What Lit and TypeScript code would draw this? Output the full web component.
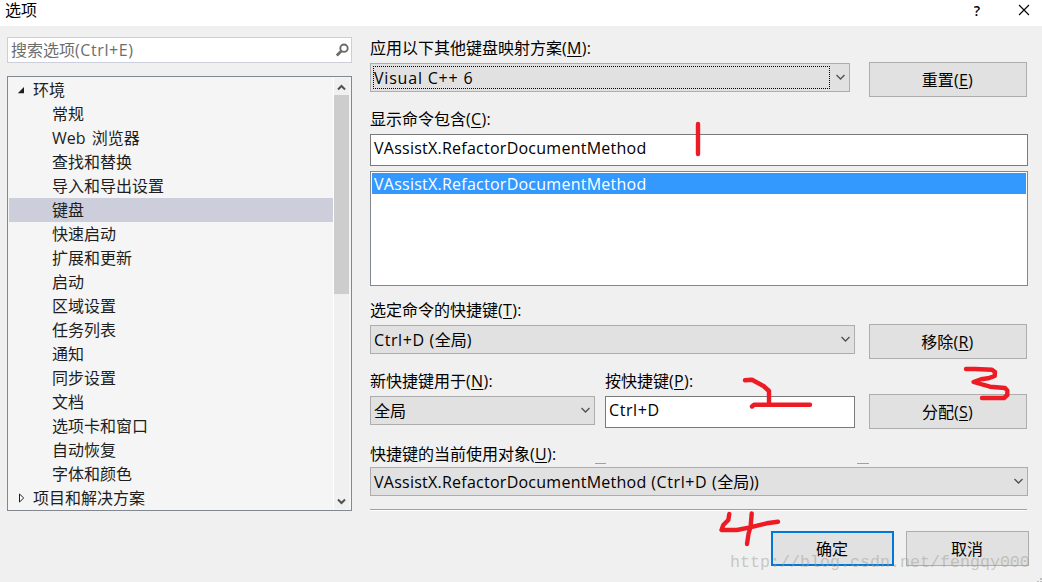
import { LitElement, html, css, svg } from "lit";
import { customElement, property } from "lit/decorators.js";

const textFont = css`"Open Sans", "Noto Sans CJK SC", sans-serif`;

@customElement("access-label")
export class AccessLabel extends LitElement {

    @property()
    text: string = "";

    @property()
    key: string = "";

    @property()
    end: string = "";

    static styles = css`
        :host {
            display: block;
            white-space: nowrap;
        }

        .latin {
            letter-spacing: 0.3px;
        }

        .key {
            text-decoration: underline;
            text-decoration-thickness: 1px;
            text-underline-offset: 2px;
        }
    `

    render() {
        return html`${this.text}<span class="latin">(<span class="key">${this.key}</span>)${this.end}</span>`;
    }
}

@customElement("combo-box")
export class ComboBox extends LitElement {

    @property({ type: Boolean })
    focused: boolean = false;

    static styles = css`
        :host {
            display: flex;
            box-sizing: border-box;
            height: 29px;
            border: 1px solid #adadad;
            background: #e1e1e1;
            padding: 2px 3px 2px 2px;
            align-items: center;
            white-space: nowrap;
        }

        .value {
            box-sizing: border-box;
            flex: 1;
            height: 23px;
            line-height: 24px;
            padding-left: 1px;
        }

        .focused {
            border: 1px dotted #000;
            line-height: 22px;
            padding-left: 0;
        }

        .arrow {
            width: 11px;
            height: 7px;
            margin-left: 5px;
            fill: none;
            stroke: #505050;
            stroke-width: 1.3;
        }
    `

    render() {
        return html`
            <div class="value ${this.focused ? "focused" : ""}"><slot></slot></div>
            <svg class="arrow" viewBox="0 0 11 7"><path d="M1.5 1 L5.5 5 L9.5 1" /></svg>
        `;
    }
}

@customElement("options-tree")
export class OptionsTree extends LitElement {

    @property()
    selected: string = "键盘";

    items: string[] = [
        "常规", "Web 浏览器", "查找和替换", "导入和导出设置", "键盘", "快速启动",
        "扩展和更新", "启动", "区域设置", "任务列表", "通知", "同步设置", "文档",
        "选项卡和窗口", "自动恢复", "字体和颜色",
    ];

    static styles = css`
        :host {
            display: flex;
            box-sizing: border-box;
            height: 435px;
            border: 1px solid #828790;
            background: #f5f5f5;
            padding: 1px 2px 1px 1px;
            color: #1e1e1e;
        }

        .rows {
            flex: 1;
            border-right: 1px solid #fff;
        }

        .row {
            height: 24px;
            line-height: 24px;
            padding-left: 43px;
            white-space: nowrap;
            word-spacing: 2px;
        }

        .root {
            display: flex;
            align-items: center;
            padding-left: 8px;
            gap: 6px;
        }

        .selected {
            background: #cccedb;
        }

        .toggle {
            width: 10px;
            height: 10px;
        }

        .scroll {
            width: 15px;
            display: flex;
            flex-direction: column;
            align-items: center;
            background: #f0f0f0;
        }

        .arrow {
            width: 9px;
            height: 7px;
            padding: 6px 0 4px;
            fill: none;
            stroke: #505050;
            stroke-width: 2;
        }

        .thumb {
            width: 15px;
            height: 199px;
            background: #cdcdcd;
            margin-bottom: auto;
        }
    `

    render() {
        return html`
            <div class="rows">
                <div class="row root">
                    <svg class="toggle" viewBox="0 0 10 10"><path d="M0.8 8.2 L7 2 V8.2 Z" fill="#1e1e1e" /></svg>
                    环境
                </div>
                ${this.items.map((item) => html`
                    <div class="row ${item === this.selected ? "selected" : ""}">${item}</div>
                `)}
                <div class="row root">
                    <svg class="toggle" viewBox="0 0 10 10"><path d="M2.5 1 L6.7 5 L2.5 9 Z" fill="#fff" stroke="#1e1e1e" /></svg>
                    项目和解决方案
                </div>
            </div>
            <div class="scroll">
                <svg class="arrow" viewBox="0 0 9 7"><path d="M1 5.5 L4.5 2 L8 5.5" /></svg>
                <div class="thumb"></div>
                <svg class="arrow" viewBox="0 0 9 7"><path d="M1 1.5 L4.5 5 L8 1.5" /></svg>
            </div>
        `;
    }
}

@customElement("app-root")
export class AppRoot extends LitElement {

    command: string = "VAssistX.RefactorDocumentMethod";

    // Hand drawn step numbers
    strokes: string[] = [
        "M698 124 V154",
        "M745 380.3 L752 379.8 L757 382.5 L763.5 386 L769 391 V404",
        "M752 406.5 L754 404.8 H810",
        "M966 369 H975 L992 369.8 L995 372 L994.7 376 L988 378.3 L981 379.3 L973.5 382 L990 386.7 L1005 388 L1007.3 390.5 V395 L1004 398 H982",
        "M729.3 514 L728.3 520 L723.3 525 L721.5 530 L737 530 L750 527.3 L766.7 523.3 L778 521.7",
        "M751.7 513.5 L750.7 526 L748.5 534 L747 544",
    ];

    static styles = css`
        :host {
            display: block;
            position: relative;
            box-sizing: border-box;
            width: 1042px;
            height: 582px;
            overflow: hidden;
            background: #f0f0f0;
            color: #000;
            font-family: ${textFont};
            font-size: 16px;
            line-height: 24px;
        }

        .titlebar {
            display: flex;
            align-items: center;
            height: 26px;
            background: #fff;
            padding: 0 12px 0 5px;
        }

        .title {
            flex: 1;
            line-height: 20px;
            padding-bottom: 6px;
        }

        .help {
            font-size: 14px;
            font-weight: 600;
            line-height: 20px;
            padding-bottom: 5px;
            margin-right: 38px;
        }

        .close {
            width: 12px;
            height: 12px;
            margin-bottom: 6px;
            stroke: #000;
            stroke-width: 1.1;
        }

        .body {
            display: flex;
            gap: 18px;
            padding: 11px 13px 0 7px;
        }

        .left {
            width: 345px;
            display: flex;
            flex-direction: column;
            gap: 13px;
        }

        .search {
            display: flex;
            align-items: center;
            justify-content: space-between;
            box-sizing: border-box;
            height: 26px;
            border: 1px solid #cccedb;
            background: #fff;
            color: #6d6d6d;
            padding: 0 2px 0 3px;
        }

        .magnifier {
            width: 14px;
            height: 14px;
            fill: none;
            stroke: #6a6a6a;
        }

        .right {
            width: 659px;
            display: flex;
            flex-direction: column;
        }

        .line {
            display: flex;
            justify-content: space-between;
            padding-right: 2px;
        }

        .label {
            height: 24px;
        }

        .first {
            margin-top: -1px;
        }

        .scheme {
            width: 480px;
            margin-top: 3px;
        }

        .assigned {
            width: 485px;
            margin-top: 3px;
        }

        .button {
            box-sizing: border-box;
            width: 158px;
            height: 35px;
            border: 1px solid #adadad;
            background: #e1e1e1;
            display: flex;
            align-items: center;
            justify-content: center;
            padding: 1px 1px 0 0;
        }

        .reset {
            margin-top: 25px;
        }

        .input {
            box-sizing: border-box;
            width: 658px;
            height: 32px;
            border: 1px solid #7a7a7a;
            background: #fff;
            padding: 1px 3px;
        }

        .filter {
            margin-top: 10px;
        }

        .input.filter {
            margin-top: 3px;
        }

        .list {
            box-sizing: border-box;
            width: 658px;
            height: 115px;
            margin-top: 5px;
            border: 1px solid #828790;
            background: #fff;
            padding: 1px;
        }

        .option {
            height: 21px;
            line-height: 23px;
            border-top: 1px solid #fff;
            margin-top: -1px;
            background: #3399ff;
            background-clip: padding-box;
            color: #fff;
            padding-left: 2px;
        }

        .shortcuts {
            margin-top: 12px;
        }

        .remove {
            margin-top: 26px;
        }

        .assign-line {
            margin-top: 10px;
        }

        .scope {
            width: 225px;
            margin-top: 3px;
        }

        .press {
            width: 250px;
            margin: 3px 14px 0 0;
        }

        .fields {
            display: flex;
            gap: 10px;
        }

        .assign {
            margin-top: 25px;
        }

        .used {
            margin-top: 13px;
        }

        .used-by {
            width: 658px;
            margin-top: 1px;
        }

        .separator {
            width: 657px;
            height: 1px;
            margin-top: 13px;
            background: #a0a0a0;
            border-bottom: 1px solid #fff;
        }

        .actions {
            display: flex;
            gap: 12px;
            justify-content: flex-end;
            margin-top: 20px;
        }

        .actions .button {
            width: 123px;
        }

        .actions .default {
            border: 2px solid #0078d7;
        }

        .latin {
            letter-spacing: 0.25px;
        }

        .keys {
            letter-spacing: 0.6px;
        }

        .version {
            letter-spacing: 0.8px;
        }

        .overlay {
            position: absolute;
            left: 0;
            top: 0;
            width: 1042px;
            height: 582px;
            pointer-events: none;
        }

        .mark {
            fill: none;
            stroke: #ed1c24;
            stroke-width: 4.4;
            stroke-linecap: round;
            stroke-linejoin: round;
        }

        .watermark {
            position: absolute;
            left: 730px;
            top: 552px;
            font-family: "Liberation Mono", monospace;
            font-size: 16.67px;
            line-height: 22px;
            color: rgba(160, 158, 145, 0.5);
            white-space: nowrap;
        }
    `

    render() {
        return html`
            <div class="titlebar">
                <div class="title">选项</div>
                <div class="help">?</div>
                <svg class="close" viewBox="0 0 12 12"><path d="M1 1 L11 11 M11 1 L1 11" /></svg>
            </div>
            <div class="body">
                <div class="left">
                    <div class="search">
                        <span>搜索选项<span class="keys">(Ctrl+E)</span></span>
                        <svg class="magnifier" viewBox="0 0 14 14">
                            <circle cx="9" cy="5.2" r="3.7" stroke-width="1.9" />
                            <path d="M6.3 8 L1.8 12.5" stroke-width="2.6" />
                        </svg>
                    </div>
                    <options-tree></options-tree>
                </div>
                <div class="right">
                    <div class="line">
                        <div>
                            <access-label class="label first" text="应用以下其他键盘映射方案" key="M" end=":"></access-label>
                            <combo-box class="scheme" focused><span class="version">Visual C++ 6</span></combo-box>
                        </div>
                        <div class="button reset"><access-label text="重置" key="E"></access-label></div>
                    </div>
                    <access-label class="label filter" text="显示命令包含" key="C" end=":"></access-label>
                    <div class="input filter"><span class="latin">${this.command}</span></div>
                    <div class="list">
                        <div class="option"><span class="latin">${this.command}</span></div>
                    </div>
                    <div class="line shortcuts">
                        <div>
                            <access-label class="label" text="选定命令的快捷键" key="T" end=":"></access-label>
                            <combo-box class="assigned"><span class="keys">Ctrl+D (</span>全局)</combo-box>
                        </div>
                        <div class="button remove"><access-label text="移除" key="R"></access-label></div>
                    </div>
                    <div class="line assign-line">
                        <div class="fields">
                            <div>
                                <access-label class="label" text="新快捷键用于" key="N" end=":"></access-label>
                                <combo-box class="scope">全局</combo-box>
                            </div>
                            <div>
                                <access-label class="label" text="按快捷键" key="P" end=":"></access-label>
                                <div class="input press"><span class="keys">Ctrl+D</span></div>
                            </div>
                        </div>
                        <div class="button assign"><access-label text="分配" key="S"></access-label></div>
                    </div>
                    <access-label class="label used" text="快捷键的当前使用对象" key="U" end=":"></access-label>
                    <combo-box class="used-by"><span class="latin">${this.command}</span><span class="keys"> (Ctrl+D (</span>全局))</combo-box>
                    <div class="separator"></div>
                    <div class="actions">
                        <div class="button default">确定</div>
                        <div class="button">取消</div>
                    </div>
                </div>
            </div>
            <div class="watermark">http://blog.csdn.net/fengqy000</div>
            <svg class="overlay" viewBox="0 0 1042 582">
                <path d="M595 463.5 H606 M857 463.5 H869" stroke="#a0a0a0" />
                <path d="M1040 578h2v2h-2z M1037 581h2v1h-2z M1040 581h2v1h-2z" fill="#bfbfbf" />
                ${this.strokes.map((stroke) => svg`<path class="mark" d=${stroke} />`)}
            </svg>
        `;
    }
}
